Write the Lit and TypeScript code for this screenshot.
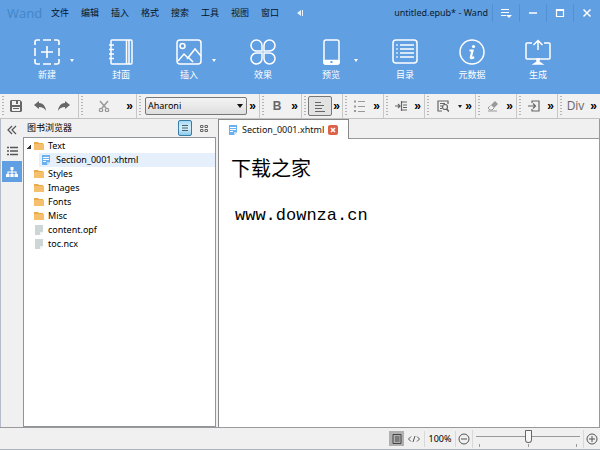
import { LitElement, html, svg, css } from "lit";
import { customElement, state } from "lit/decorators.js";

const stroke = (size: number, body: unknown, width = 1.2) => html`<svg
  width=${size} height=${size} viewBox="0 0 ${size} ${size}" fill="none"
  stroke="currentColor" stroke-width=${width} aria-hidden="true">${body}</svg>`;

const big = {
  create: svg`<path stroke-width="1.6" d="M1 6V3Q1 1 3 1H6M9 1H17M20 1H23Q25 1 25 3V6M25 9V17M25 20V23Q25 25 23 25H20M17 25H9M6 25H3Q1 25 1 23V20M1 17V9M13 7V19M7 13H19"/>`,
  cover: svg`<rect x="3" y="1" width="21" height="24" rx="1"/><path d="M18.500 1V25M21 1V25M1 6H6M1 10.500H6M1 15H6M1 19.500H6" />`,
  insert: svg`<rect x="1" y="1" width="24" height="24" rx="3"/><circle cx="6.500" cy="7" r="2.500"/><path d="M2 22L8 15L12 19M11 20L19 10L25 17M12 18L17 23"/>`,
  effect: svg`<path d="M12 12H7A5.500 5.500 0 1 1 12 6.500ZM14 12V6.500A5.500 5.500 0 1 1 19.500 12ZM12 14V19.500A5.500 5.500 0 1 1 6.500 14ZM14 14H19.500A5.500 5.500 0 1 1 14 19.500Z"/>`,
  preview: svg`<rect x="6" y="1" width="15" height="24" rx="2"/><path d="M6 21.500H21V24Q21 25 20 25H7Q6 25 6 24Z" fill="currentColor"/><rect x="12.500" y="22" width="2" height="2" fill="#609fe2" stroke="none"/>`,
  toc: svg`<rect x="1" y="1" width="24" height="23" rx="3"/><path d="M8 6H22M8 10H22M8 14H22M8 18H22"/><path stroke-dasharray="1.500 2.500" d="M5 5.300V20"/>`,
  meta: svg`<circle cx="13" cy="13" r="12"/><circle cx="14.500" cy="7.500" r="1.600" fill="currentColor" stroke="none"/><path stroke-width="2.200" d="M10.500 11.500H13.500L11.800 18.500Q12 20 15 18"/>`,
  build: svg`<path d="M7 4H2Q1 4 1 5V19Q1 20 2 20H24Q25 20 25 19V5Q25 4 24 4H19M13 11V2M8.500 6L13 1.500L17.500 6"/><path fill="currentColor" d="M12 20H14V23L17 25H9L12 23Z"/>`,
};

const save = stroke(12, svg`<path fill="currentColor" stroke="none" fill-rule="evenodd" d="M1 0H10L12 2V11L11 12H1L0 11V1ZM2 1V5H10V1ZM2 7V11H10V7ZM3 8H9V9H3ZM6 1H8V4H6Z"/>`);
const undo = stroke(12, svg`<path fill="currentColor" stroke="none" d="M0 5L5 1V3Q11 3 12 11Q10 7 5 7V9Z"/>`);
const redo = stroke(12, svg`<path fill="currentColor" stroke="none" d="M12 5L7 1V3Q1 3 0 11Q2 7 7 7V9Z"/>`);
const cut = stroke(12, svg`<path stroke-width="1.500" d="M2 1L8 8M10 1L4 8"/><circle cx="3" cy="10" r="1.700"/><circle cx="9" cy="10" r="1.700"/>`);
const alignLeft = stroke(12, svg`<path d="M1 2.500H7M1 5.500H10M1 8.500H8M1 11.500H11"/>`, 1);
const list = stroke(12, svg`<path d="M4 1.500H11M4 6.500H11M4 11.500H11" stroke-width="1"/><path stroke-width="2" d="M0 1.500H2M0 6.500H2M0 11H2"/>`);
const indent = stroke(12, svg`<path d="M0 6H5M3 4L5 6L3 8M6.500 1V11M7 2H12M8 5H12M8 7.500H12M7 10H12"/>`);
const find = stroke(12, svg`<path d="M11 4V1H1V11H5M3 3.500H8M3 6H5M3 8.500H5"/><circle cx="8" cy="7" r="2.500"/><path stroke-width="1.700" d="M9.500 9L12 11.500"/>`);
const eraser = stroke(12, svg`<path fill="currentColor" stroke="none" d="M8 1L11 4L7 8L4 5Z"/><path d="M3.500 5.500L1 8L3 10H5L7 8M1 11H10"/>`, 1);
const enter = stroke(12, svg`<path d="M4 3V1H11V11H4V9M0 6H7M5 3.500L7.500 6L5 8.500"/>`);
const page = (color: string) => html`<svg class="glyph" width="10" height="10" viewBox="0 0 10 10" aria-hidden="true"><path fill=${color} d="M1 0H9V7L6 10H1Z"/><path fill="#fff" d="M6 10V7H9Z" opacity=".7"/></svg>`;
const blueFile = html`<svg class="glyph" width="10" height="10" viewBox="0 0 10 10" aria-hidden="true"><path fill="#6bb0ef" d="M1 0H9V7L6 10H1Z"/><path stroke="#fff" d="M2 2.500H8M2 4.500H8M2 6.500H5"/><path fill="#b8dcfa" d="M6 10V7H9Z"/></svg>`;
const folder = html`<svg class="glyph" width="10" height="10" viewBox="0 0 10 10" aria-hidden="true"><path fill="#eba94a" d="M0 1H4L5 2H9V4H0Z"/><path fill="#f6bf6b" d="M0 3H10V9H0Z"/></svg>`;

interface Tool { label: string; icon: unknown; drop?: boolean; narrow?: boolean }

const tools: Tool[] = [
  { label: "新建", icon: big.create, drop: true },
  { label: "封面", icon: big.cover },
  { label: "插入", icon: big.insert, drop: true },
  { label: "效果", icon: big.effect },
  { label: "预览", icon: big.preview, drop: true },
  { label: "目录", icon: big.toc },
  { label: "元数据", icon: big.meta, narrow: true },
  { label: "生成", icon: big.build, narrow: true },
];

const menus = ["文件", "编辑", "插入", "格式", "搜索", "工具", "视图", "窗口"];
const files = [
  { name: "Text", icon: folder, open: true },
  { name: "Section_0001.xhtml", icon: blueFile, child: true },
  { name: "Styles", icon: folder },
  { name: "Images", icon: folder },
  { name: "Fonts", icon: folder },
  { name: "Misc", icon: folder },
  { name: "content.opf", icon: page("#cdd6d6") },
  { name: "toc.ncx", icon: page("#cdd6d6") },
];

@customElement("app-root")
export class AppRoot extends LitElement {
  @state() private selected = "Section_0001.xhtml";

  static styles = css`
    :host {
      display: flex; flex-direction: column; height: 100vh; box-sizing: border-box;
      background: #f0f0f0; color: #111; font: 9px/14px "Noto Sans", "Noto Sans CJK SC", sans-serif;
      border-bottom: 1px solid #a9b4be; overflow: hidden;
    }
    * { box-sizing: border-box; }
    button { font: inherit; color: inherit; background: none; border: 0; padding: 0; margin: 0; display: flex; align-items: center; justify-content: center; flex: none; white-space: nowrap; }
    svg { flex: none; display: block; }
    .top { background: #609fe2; height: 94px; flex: none; }
    .title { display: flex; align-items: center; height: 25px; padding-left: 7px; }
    .brand { font-size: 13px; color: #4286c9; width: 38px; font-family: "Open Sans", sans-serif; }
    .menus { display: flex; }
    .menus button { width: 30px; height: 24px; color: #061426; }
    .fold { color: #e7f2ff; width: 30px; }
    .doc { margin-left: auto; padding-right: 4px; color: #0b1c30; }
    .win { width: 27px; height: 18px; color: #fff; border-left: 1px solid #5390d3; }
    .tools { display: flex; gap: 24px; padding: 14px 0 0 25px; color: #fff; }
    .cell { display: flex; align-items: flex-start; }
    .tool { width: 44px; flex-direction: column; gap: 3px; }
    .narrow { width: 42px; }
    .drop { width: 6px; height: 42px; }
    .tri { width: 0; height: 0; border: 2px solid transparent; border-top: 3px solid currentColor; border-bottom: 0; }
    .bar {
      display: grid; grid-template-columns: 79fr 58fr 123fr 42fr 41fr 41fr 41fr 51fr 41fr 41fr 42fr;
      height: 25px; flex: none; border-bottom: 1px solid #c3c3c3; color: #666;
    }
    .seg { display: flex; align-items: center; border-right: 1px solid #c8c8c8; padding: 0 2px; min-width: 0; background: #f1f1f1; }
    .seg:last-child { border-right: 0; }
    .seg::before { content: ""; width: 2px; height: 20px; flex: none; background: repeating-linear-gradient(#b4b4b4 0 1px, transparent 1px 3px); }
    .seg.faded { color: #999; }
    .seg .act { flex: 1; height: 20px; min-width: 0; }
    .seg .pressed { border: 1px solid #777; border-radius: 2px; background: #e2e2e2; flex: none; width: 24px; margin-left: 2px; }
    .bold { font: bold 12px/14px "Liberation Sans", sans-serif; }
    .div { font: 12px/14px "Open Sans", sans-serif; }
    .more { color: #000; font: bold 12px/14px "Liberation Sans", sans-serif; width: 9px; height: 20px; margin-left: auto; }
    .small { color: #222; width: 8px; height: 20px; }
    .pick { flex: 1; position: relative; display: flex; min-width: 0; margin: 0 1px 0 4px; }
    .pick select { appearance: none; width: 100%; height: 18px; font: inherit; color: #000; border: 1px solid #777; border-radius: 2px; padding: 0 2px; background: linear-gradient(#f4f4f4, #dedede); margin: 0; }
    .pick::after { content: ""; position: absolute; right: 4px; top: 7px; border: 3px solid transparent; border-top: 4px solid #111; border-bottom: 0; pointer-events: none; }
    .main { display: flex; flex: 1; min-height: 0; }
    .rail { width: 23px; padding-left: 1px; border-left: 1px solid #b3bcc8; flex: none; display: flex; flex-direction: column; }
    .rail button { width: 20px; height: 21px; color: #555; }
    .rail .on { background: #609fe2; color: #fff; }
    .side { width: 193px; flex: none; display: flex; flex-direction: column; }
    .head { display: flex; align-items: center; height: 18px; flex: none; padding-left: 4px; color: #000; }
    .head .on { margin-left: auto; width: 14px; height: 16px; border: 1px solid #347da8; border-radius: 2px; background: linear-gradient(#a8daf3, #d7f1fc, #8bc9ea); color: #47606e; }
    .head .off { width: 24px; height: 16px; color: #666; }
    .tree { flex: 1; background: #fff; border: 1px solid #8f959c; margin: 0; padding: 1px 0; list-style: none; }
    .row { width: 100%; height: 14px; justify-content: flex-start; padding-left: 2px; gap: 3px; color: #000; }
    .row .glyph { margin-right: 1px; }
    .row .arrow { width: 5px; height: 5px; flex: none; }
    .row .open { background: linear-gradient(135deg, transparent 50%, #333 50%); }
    .child { padding-left: 15px; }
    .child .sel { background: #e6f0fd; padding-left: 0; }
    .child .arrow { display: none; }
    .child .glyph { margin: 0 2px; }
    .edit-area { flex: 1; margin-left: 2px; display: flex; flex-direction: column; min-width: 0; border-right: 1px solid #999; }
    .tabs { display: flex; height: 20px; flex: none; }
    .tab { display: flex; align-items: center; gap: 4px; background: #fff; border: 1px solid #888; border-bottom: 0; width: 131px; padding-left: 9px; flex: none; }
    .tabs::after { content: ""; flex: 1; border-bottom: 1px solid #999; }
    .close { width: 10px; height: 10px; border-radius: 2px; background: #dc6248; color: #fff; }
    .paper { flex: 1; background: #fff; border-left: 1px solid #888; padding: 14px 12px; color: #000; }
    .paper h1 { margin: 0; font: 400 20px/30px "Noto Sans CJK SC", sans-serif; }
    .paper p { margin: 0; padding: 18px 4px; font: 17px/30px "Liberation Mono", monospace; }
    .status { display: flex; align-items: center; justify-content: flex-end; height: 22px; flex: none; border-top: 1px solid #999; color: #555; }
    .view { width: 15px; height: 15px; background: #b0b0b0; color: #444; }
    .code { width: 20px; height: 15px; }
    .zoom { border: solid #d8d8d8; border-width: 0 1px; width: 32px; color: #000; text-align: center; line-height: 16px; }
    .step { width: 16px; height: 16px; }
    .range { width: 112px; border: solid #d8d8d8; border-width: 0 1px; display: flex; flex-direction: column; height: 18px; padding: 0 3px; }
    .range input { appearance: none; width: 100%; height: 14px; margin: 0; background: linear-gradient(#999, #999) center / 100% 1px no-repeat; }
    .range input::-webkit-slider-thumb { appearance: none; width: 7px; height: 13px; background: #f7f7f7; border: 1px solid #666; border-radius: 1px 1px 4px 4px; }
    .ticks { display: flex; justify-content: space-between; padding: 0 3px; }
    .ticks i { width: 1px; height: 3px; background: #999; }
  `;

  private more() {
    return html`<button class="more" aria-label="更多">»</button>`;
  }

  private seg(kind: string, label: string, icon: unknown, look = "") {
    return html`<div class="seg ${kind}"><button class="act ${look}" aria-label=${label}>${icon}</button>${this.more()}</div>`;
  }

  render() {
    return html`
      <header class="top">
        <div class="title">
          <span class="brand">Wand</span>
          <nav class="menus">${menus.map((m) => html`<button>${m}</button>`)}</nav>
          <button class="fold" aria-label="收起">${stroke(8, svg`<path fill="currentColor" stroke="none" d="M1 4L5 1V7ZM6 1H7V7H6Z"/>`)}</button>
          <span class="doc">untitled.epub* - Wand</span>
          <button class="win" aria-label="选项">${stroke(12, svg`<path d="M1 2.500H9M1 5.500H9M1 8.500H6"/><path fill="currentColor" stroke="none" d="M6 8H12L9 11Z"/>`)}</button>
          <button class="win" aria-label="最小化">${stroke(10, svg`<path stroke-width="1.500" d="M1 5H9"/>`)}</button>
          <button class="win" aria-label="最大化">${stroke(10, svg`<path d="M1.500 1.500H8.500V8.500H1.500ZM1 2.500H9"/>`)}</button>
          <button class="win" aria-label="关闭">${stroke(10, svg`<path stroke-width="1.500" d="M1.500 1.500L8.500 8.500M8.500 1.500L1.500 8.500"/>`)}</button>
        </div>
        <div class="tools">
          ${tools.map((t) => html`<div class="cell">
            <button class="tool ${t.narrow ? "narrow" : ""}">${stroke(26, t.icon, 1.5)}<span>${t.label}</span></button>
            ${t.drop ? html`<button class="drop" aria-label="${t.label}选项"><span class="tri"></span></button>` : ""}
          </div>`)}
        </div>
      </header>
      <div class="bar">
        <div class="seg">
          <button class="act" aria-label="保存">${save}</button>
          <button class="act" aria-label="撤销">${undo}</button>
          <button class="act" aria-label="重做">${redo}</button>
        </div>
        ${this.seg("faded", "剪切", cut)}
        <div class="seg">
          <div class="pick"><select aria-label="字体"><option>Aharoni</option></select></div>
          ${this.more()}
        </div>
        ${this.seg("", "粗体", html`<span class="bold">B</span>`)}
        ${this.seg("", "左对齐", alignLeft, "pressed")}
        ${this.seg("faded", "列表", list)}
        ${this.seg("", "缩进", indent)}
        <div class="seg">
          <button class="act" aria-label="查找">${find}</button>
          <button class="small" aria-label="查找选项"><span class="tri"></span></button>
          ${this.more()}
        </div>
        ${this.seg("faded", "清除格式", eraser)}
        ${this.seg("", "插入标签", enter)}
        ${this.seg("", "Div", html`<span class="div">Div</span>`)}
      </div>
      <main class="main">
        <nav class="rail">
          <button aria-label="收起侧栏">${stroke(10, svg`<path d="M5 1L1 5L5 9M9 1L5 5L9 9"/>`)}</button>
          <button aria-label="目录">${stroke(12, svg`<path stroke-width="1.500" d="M4 2.500H12M4 6H12M4 9.500H12M1 2.500H3M1 6H3M1 9.500H3"/>`)}</button>
          <button class="on" aria-label="图书浏览器">${stroke(12, svg`<path d="M6 3V9M2 9V6H10V9"/><path fill="currentColor" stroke="none" d="M4.500 1H7.500V4H4.500ZM0 8H3.500V11H0ZM4.300 8H7.700V11H4.300ZM8.500 8H12V11H8.500Z"/>`)}</button>
        </nav>
        <section class="side">
          <div class="head">
            <span>图书浏览器</span>
            <button class="on" aria-label="列表视图">${stroke(8, svg`<path d="M1 1.500H7M1 4H7M1 6.500H7"/>`)}</button>
            <button class="off" aria-label="图标视图">${stroke(8, svg`<path stroke-width="1" d="M.5 1.500H3V3.500H.5ZM5 1.500H7.500V3.500H5ZM.5 5.500H3V7.500H.5ZM5 5.500H7.500V7.500H5Z"/>`)}</button>
          </div>
          <ul class="tree">
            ${files.map((f) => html`<li class=${f.child ? "child" : ""}>
              <button class="row ${this.selected === f.name ? "sel" : ""}" @click=${() => (this.selected = f.name)}>
                <span class="arrow ${f.open ? "open" : ""}"></span>${f.icon}<span>${f.name}</span>
              </button></li>`)}
          </ul>
        </section>
        <section class="edit-area">
          <div class="tabs"><div class="tab">${blueFile}<span>Section_0001.xhtml</span>
            <button class="close" aria-label="关闭标签">${stroke(6, svg`<path stroke-width="1.500" d="M1 1L5 5M5 1L1 5"/>`)}</button></div></div>
          <article class="paper"><h1>下载之家</h1><p>www.downza.cn</p></article>
        </section>
      </main>
      <footer class="status">
        <button class="view" aria-label="书本视图">${stroke(10, svg`<path stroke-width="1" d="M1 .5H9V9.500H1ZM3 3H7.500M3 5H7.500M3 7H7.500"/>`)}</button>
        <button class="code" aria-label="代码视图">${stroke(12, svg`<path stroke-width="1" d="M3 3.500L.5 6L3 8.500M9 3.500L11.500 6L9 8.500M7 3L5 9"/>`)}</button>
        <span class="zoom">100%</span>
        <button class="step" aria-label="缩小">${stroke(12, svg`<circle cx="6" cy="6" r="5"/><path d="M3 6H9"/>`, 1)}</button>
        <div class="range"><input type="range" aria-label="缩放" min="0" max="100" value="50" /><div class="ticks"><i></i><i></i><i></i></div></div>
        <button class="step" aria-label="放大">${stroke(12, svg`<circle cx="6" cy="6" r="5"/><path d="M3 6H9M6 3V9"/>`, 1)}</button>
      </footer>`;
  }
}
